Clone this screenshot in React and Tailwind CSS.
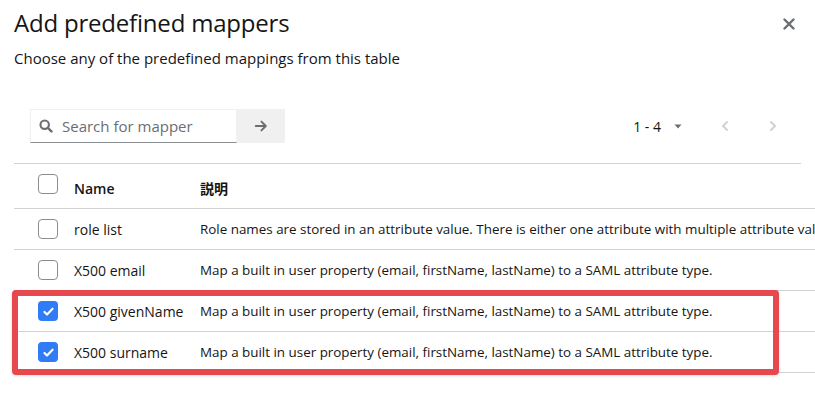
import React from 'react'

const rows = [
  { name: 'role list', desc: 'Role names are stored in an attribute value. There is either one attribute with multiple attribute values, or an attribute per role.', checked: false },
  { name: 'X500 email', desc: 'Map a built in user property (email, firstName, lastName) to a SAML attribute type.', checked: false },
  { name: 'X500 givenName', desc: 'Map a built in user property (email, firstName, lastName) to a SAML attribute type.', checked: true },
  { name: 'X500 surname', desc: 'Map a built in user property (email, firstName, lastName) to a SAML attribute type.', checked: true },
]

function Checkbox({ checked }) {
  if (checked) {
    return (
      <span className="flex h-5 w-5 items-center justify-center rounded-[4px] bg-[#2f7cf6]">
        <svg width="13" height="13" viewBox="0 0 16 16" fill="none">
          <path d="M3 8.5l3.2 3.2L13 4.5" stroke="white" strokeWidth="2.6" strokeLinecap="round" strokeLinejoin="round" />
        </svg>
      </span>
    )
  }
  return <span className="block h-5 w-5 rounded-[4px] border border-[#8a8d90] bg-white" />
}

function Row({ r }) {
  return (
    <div className="flex h-[41px] items-center border-b border-[#d2d2d2] text-[14px] text-[#151515]">
      <div className="w-[60px] shrink-0 pl-6">
        <Checkbox checked={r.checked} />
      </div>
      <div className="w-[126px] shrink-0">{r.name}</div>
      <div className="shrink-0 text-[13.4px]">{r.desc}</div>
    </div>
  )
}

export default function App() {
  return (
    <div className="relative h-[399px] w-[815px] overflow-hidden bg-white text-[#151515]" style={{ fontFamily: '"Open Sans", "Noto Sans CJK JP", sans-serif' }}>
      <div className="flex items-start justify-between px-[14px] pt-[5px]">
        <h1 className="text-[24px] font-medium leading-[36px] tracking-[-0.2px]">Add predefined mappers</h1>
        <button className="mr-[6px] mt-[13px] text-[#6a6e73]">
          <svg width="12" height="12" viewBox="0 0 12 12">
            <path d="M1.5 1.5l9 9M10.5 1.5l-9 9" stroke="currentColor" strokeWidth="2.4" strokeLinecap="round" />
          </svg>
        </button>
      </div>
      <p className="px-[14px] pt-[6px] text-[15px] leading-[22px]">Choose any of the predefined mappings from this table</p>

      <div className="mx-[14px] mt-[25px] flex h-[70px] items-start border-b border-[#d2d2d2] pl-4 pt-[15px]">
        <div className="flex h-[34px] w-[207px] items-center gap-[9px] border border-b-[#8a8d90] border-[#f0f0f0] pl-2">
          <svg width="14" height="14" viewBox="0 0 16 16" className="text-[#6a6e73]">
            <circle cx="6.5" cy="6.5" r="4.8" fill="none" stroke="currentColor" strokeWidth="2.4" />
            <path d="M10 10l4.2 4.2" stroke="currentColor" strokeWidth="2.8" strokeLinecap="round" />
          </svg>
          <span className="text-[15px] text-[#6a6e73]">Search for mapper</span>
        </div>
        <div className="flex h-[34px] w-12 items-center justify-center bg-[#f0f0f0] text-[#6a6e73]">
          <svg width="14" height="14" viewBox="0 0 16 16" fill="none">
            <path d="M2 8h11M8.5 3l5 5-5 5" stroke="currentColor" strokeWidth="2.2" strokeLinecap="round" strokeLinejoin="round" />
          </svg>
        </div>
        <div className="ml-auto flex h-[34px] items-center text-[14px]">
          <span>1 - 4</span>
          <svg width="10" height="10" viewBox="0 0 10 10" className="ml-[12px] text-[#6a6e73]">
            <path d="M1.5 3.5h7L5 7.5z" fill="currentColor" />
          </svg>
          <svg width="10" height="12" viewBox="0 0 10 12" className="ml-[37px] text-[#d2d2d2]">
            <path d="M7 2L3 6l4 4" fill="none" stroke="currentColor" strokeWidth="2" strokeLinecap="round" strokeLinejoin="round" />
          </svg>
          <svg width="10" height="12" viewBox="0 0 10 12" className="ml-[38px] mr-[23px] text-[#d2d2d2]">
            <path d="M3 2l4 4-4 4" fill="none" stroke="currentColor" strokeWidth="2" strokeLinecap="round" strokeLinejoin="round" />
          </svg>
        </div>
      </div>

      <div className="ml-[14px] w-[1000px] whitespace-nowrap">
        <div className="flex h-[45px] items-center border-b border-[#d2d2d2] text-[14px] font-semibold">
          <div className="w-[60px] shrink-0 pb-[5px] pl-6">
            <Checkbox checked={false} />
          </div>
          <div className="w-[126px] shrink-0 pt-[4px]">Name</div>
          <div className="pt-[4px]">説明</div>
        </div>
        {rows.map(r => <Row key={r.name} r={r} />)}
      </div>

      <div className="pointer-events-none absolute left-[12px] top-[290px] h-[85px] w-[767px] rounded-[4px] border-[6px] border-[#e5484d] shadow-[0_1px_3px_rgba(0,0,0,0.15)]" />
    </div>
  )
}
